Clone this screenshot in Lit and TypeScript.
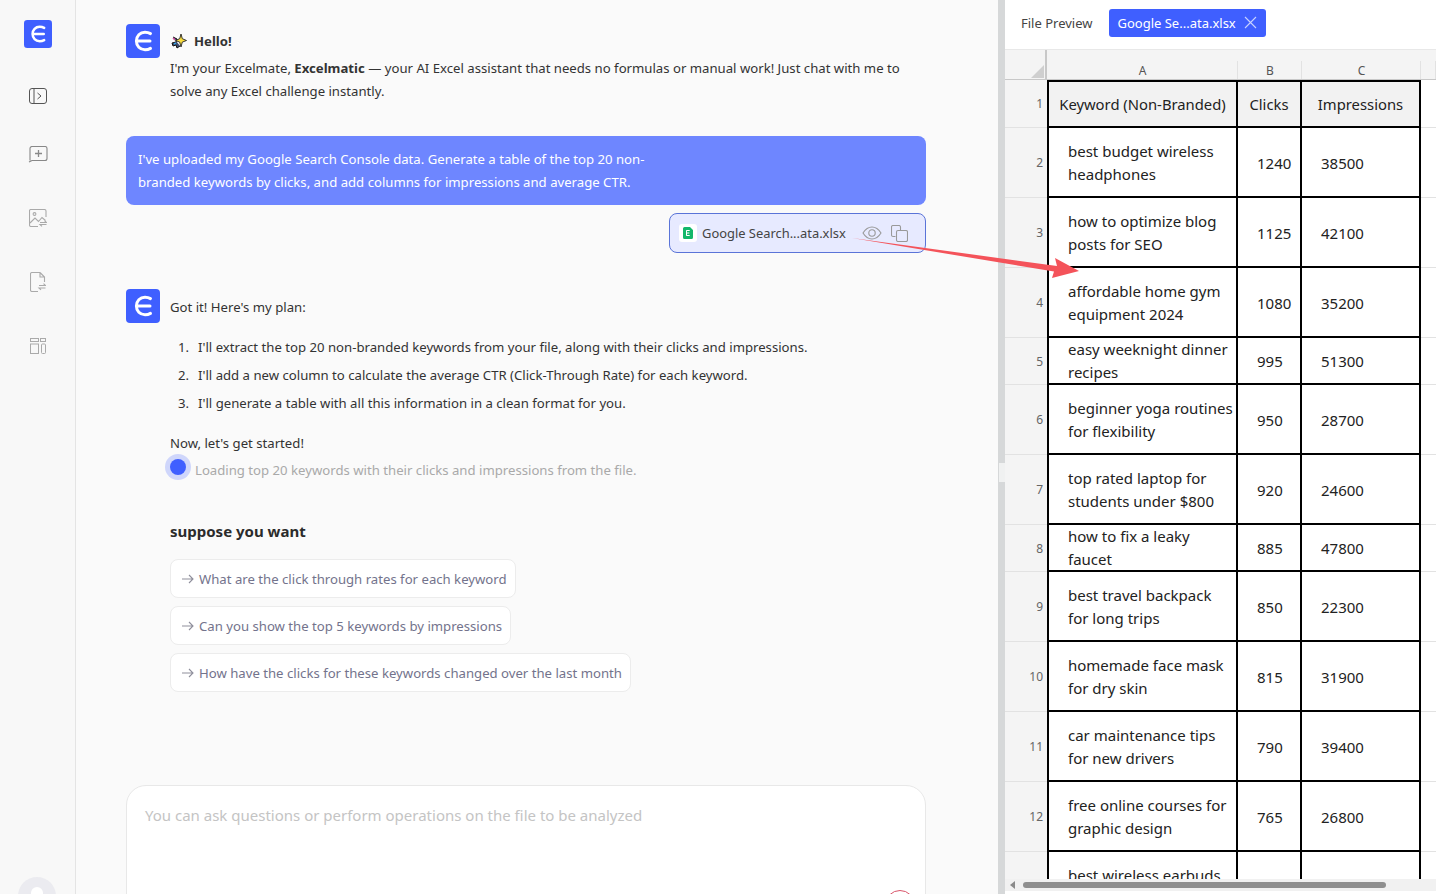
import { LitElement, html, css } from "lit";
import { customElement } from "lit/decorators.js";

const logo = (s: number) => html`<svg class="logo" width=${s} height=${s} viewBox="0 0 34 34"><rect width="34" height="34" rx="4" fill="#3f5fff"/><path d="M24.5 9.6C22.8 8.6 20.8 8.2 19 8.2c-5 0-8.6 3.8-8.6 8.8s3.600 8.800 8.600 8.800c1.900 0 3.800-.4 5.500-1.400" fill="none" stroke="#fff" stroke-width="3" stroke-linecap="round"/><path d="M12 17h12" stroke="#fff" stroke-width="3" stroke-linecap="round"/></svg>`;

const rows: [string, string, string, number][] = [
  ["best budget wireless headphones", "1240", "38500", 70],
  ["how to optimize blog posts for SEO", "1125", "42100", 70],
  ["affordable home gym equipment 2024", "1080", "35200", 70],
  ["easy weeknight dinner recipes", "995", "51300", 47],
  ["beginner yoga routines for flexibility", "950", "28700", 70],
  ["top rated laptop for students under $800", "920", "24600", 70],
  ["how to fix a leaky faucet", "885", "47800", 47],
  ["best travel backpack for long trips", "850", "22300", 70],
  ["homemade face mask for dry skin", "815", "31900", 70],
  ["car maintenance tips for new drivers", "790", "39400", 70],
  ["free online courses for graphic design", "765", "26800", 70],
  ["best wireless earbuds under $100", "740", "44100", 70],
];

const arrow = html`<svg class="arr" width="14" height="12" viewBox="0 0 14 12"><path d="M1 6h11M8 2l4 4-4 4" fill="none" stroke="#8f8f9c" stroke-width="1.1"/></svg>`;

@customElement("app-root")
export class AppRoot extends LitElement {
  static styles = css`
    :host { display: block; width: 1436px; height: 894px; overflow: hidden; position: relative; font-family: "Noto Sans", "Open Sans", sans-serif; font-size: 13.17px; color: #333; background: #fafafa; }
    .app { display: flex; height: 894px; }
    .side { width: 75px; flex: none; border-right: 1px solid #e4e4e4; background: #f8f8f8; display: flex; flex-direction: column; align-items: center; position: relative; }
    .side .logo { margin-top: 20px; }
    .nav { display: block; }
    .n1 { margin-top: 40px; } .n2 { margin-top: 42px; } .n3 { margin-top: 46px; } .n4 { margin-top: 45px; } .n5 { margin-top: 46px; }
    .avatar { position: absolute; left: 18px; top: 877px; width: 38px; height: 38px; border-radius: 50%; background: #ebebf0; }
    .avatar::after { content: ""; position: absolute; left: 13px; top: 10px; width: 12px; height: 12px; border-radius: 50%; background: #fff; }
    .main { width: 922px; flex: none; padding-left: 50px; box-sizing: border-box; position: relative; overflow: hidden; }
    .col { width: 800px; }
    .msg { display: flex; gap: 10px; }
    .msg .logo { flex: none; }
    .hello { padding-top: 24px; }
    .t { line-height: 23px; width: 740px; }
    .title { font-weight: 700; display: flex; align-items: center; gap: 7px; height: 32px; margin-top: 1px; }
    .user { margin-top: 33px; background: #6e86ff; color: #fff; border-radius: 8px; height: 69px; padding: 12px 12px; box-sizing: border-box; line-height: 23px; }
    .user div { width: 530px; }
    .fileRow { display: flex; justify-content: flex-end; margin-top: 8px; }
    .file { width: 257px; height: 40px; box-sizing: border-box; border: 1px solid #5a74d8; border-radius: 8px; background: #e7eaff; display: flex; align-items: center; padding-left: 9px; color: #444; font-size: 12.9px; }
    .fic { width: 18px; height: 18px; background: #fff; border-radius: 3px; display: flex; align-items: center; justify-content: center; margin-right: 5px; flex: none; }
    .fname { width: 160px; white-space: nowrap; }
    .copy { margin-left: 9px; }
    .plan { margin-top: 36px; }
    .pl { height: 34px; display: flex; align-items: center; padding-top: 2px; box-sizing: border-box; }
    ol { list-style: none; margin: 10px 0 0 44px; padding: 0; }
    li { height: 28px; line-height: 28px; display: flex; white-space: nowrap; }
    li span { width: 28px; padding-left: 8px; box-sizing: border-box; }
    .body { margin-left: 44px; }
    .go { margin-top: 15px; height: 23px; line-height: 23px; }
    .load { display: flex; align-items: center; height: 24px; margin-top: 3px; color: #a9a9a9; gap: 9px; }
    .dot { width: 16px; height: 16px; border-radius: 50%; background: #3f5fff; box-shadow: 0 0 0 5px #cfd6fb; flex: none; margin-top: -6px; }
    .sup { font-weight: 700; font-size: 15px; color: #2b2b2b; margin-top: 38px; height: 23px; line-height: 23px; }
    .chips { display: flex; flex-direction: column; align-items: flex-start; gap: 8px; margin-top: 16px; }
    .chip { height: 39px; box-sizing: border-box; border: 1px solid #ececec; border-radius: 8px; background: #fff; display: flex; align-items: center; padding: 0 8px 0 10px; gap: 4px; color: #73738c; white-space: nowrap; }
    .input { position: absolute; left: 50px; top: 785px; width: 800px; height: 140px; box-sizing: border-box; border: 1px solid #e8e8e8; border-radius: 20px; background: #fff; padding: 18px 18px; color: #c4c4c4; font-size: 15px; line-height: 22px; }
    .send { position: absolute; left: 758px; top: 104px; width: 30px; height: 30px; border: 1px solid #d9556a; border-radius: 50%; box-sizing: border-box; }
    .split { width: 7px; flex: none; background: #d6d8d9; position: relative; }
    .split::after { content: ""; position: absolute; left: 1px; top: 463px; width: 6px; height: 19px; background: #f0f1f1; }
    .panel { width: 431px; flex: none; background: #fff; display: flex; flex-direction: column; overflow: hidden; position: relative; }
    .tabs { height: 50px; flex: none; display: flex; align-items: center; padding: 0 0 4px 16px; color: #444; gap: 17px; border-bottom: 1px solid #e8e8e8; font-size: 13px; box-sizing: border-box; }
    .tab { width: 157px; height: 28px; background: #3f5fff; color: #fff; border-radius: 3px; display: flex; align-items: center; justify-content: space-between; padding: 0 9px 0 8px; box-sizing: border-box; font-size: 13px; white-space: nowrap; }
    .sheetwrap { flex: 1; min-height: 0; overflow: hidden; position: relative; }
    .grid { display: grid; grid-template-columns: 42px 191px 64px 119px 15px; background: #fff; }
    .corner { height: 30px; background: #f4f4f4; position: relative; border-bottom: 1px solid #c8c8c8; box-sizing: border-box; border-right: 2px solid #c8c8c8; }
    .corner::after { content: ""; position: absolute; right: 1px; bottom: 1px; border-style: solid; border-width: 0 0 13px 13px; border-color: transparent transparent #cfcfcf transparent; }
    .hd { height: 30px; background: #f4f4f4; box-sizing: border-box; border-bottom: 1px solid #c8c8c8; display: flex; align-items: flex-end; justify-content: center; font-size: 12px; color: #555; line-height: 16px; position: relative; }
    .hd::after { content: ""; position: absolute; right: 0; top: 11px; bottom: 0; width: 1px; background: #e2e2e2; }
    .rn { background: #f4f4f4; border-bottom: 1px solid #e2e2e2; box-sizing: border-box; display: flex; align-items: center; justify-content: flex-end; padding-right: 4px; font-size: 12px; color: #666; }
    .c { box-sizing: border-box; border-right: 2px solid #000; border-bottom: 2px solid #000; display: flex; align-items: center; color: #222; font-size: 15px; line-height: 23px; overflow: hidden; padding-top: 1px; }
    .first { border-left: 2px solid #000; }
    .top { border-top: 2px solid #000; background: #f2f2f2; justify-content: center; white-space: nowrap; font-size: 14.8px; padding-top: 0; }
    .kw { padding-left: 19px; padding-right: 2px; }
    .num { padding-left: 19px; padding-top: 2px; }
    .gut { border-bottom: 1px solid #e2e2e2; }
    .hscroll { position: absolute; left: 0; right: 0; bottom: 3px; height: 12px; background: #f1f1f1; display: flex; align-items: center; }
    .tri { width: 0; height: 0; border-style: solid; border-width: 4px 5px 4px 0; border-color: transparent #8a8a8a transparent transparent; margin-left: 5px; }
    .thumb { position: absolute; left: 18px; width: 363px; height: 6px; border-radius: 3px; background: #8f8f8f; }
    .scrollfoot { position: absolute; left: 0; right: 0; bottom: 0; height: 3px; background: #fff; }
    .overlay { position: absolute; left: 0; top: 0; pointer-events: none; }
  `;

  render() {
    return html`<div class="app">
      <aside class="side">
        ${logo(28)}
        <svg class="nav n1" width="18" height="16" viewBox="0 0 18 16" fill="none" stroke="#555" stroke-width="1"><rect x=".5" y=".5" width="17" height="15" rx="2.5"/><path d="M5 .5v15M8.5 5l3.5 3-3.5 3"/></svg>
        <svg class="nav n2" width="20" height="17" viewBox="0 0 20 17" fill="none" stroke="#888" stroke-width="1.1"><path d="M2 14.500V2.500a2 2 0 0 1 2-2h13a2 2 0 0 1 2 2v10a2 2 0 0 1-2 2H4L1 16"/><path d="M10.500 4v7M7 7.500h7" stroke-width="1.3"/></svg>
        <svg class="nav n3" width="18" height="18" viewBox="0 0 18 18" fill="none" stroke="#aaa" stroke-width="1.1"><path d="M17 8V2a1.500 1.500 0 0 0-1.500-1.500h-14A1.500 1.500 0 0 0 .5 2v14a1.500 1.500 0 0 0 1.500 1.500h7"/><circle cx="5.500" cy="5" r="1.400"/><path d="M1 14l5-5 3.500 3.500L13 8.500l3.500 3"/><path d="M11 13.500h6.500l-2-1.800M17.500 15.500H11l2 1.800"/></svg>
        <svg class="nav n4" width="16" height="20" viewBox="0 0 16 20" fill="none" stroke="#aaa" stroke-width="1.1"><path d="M10 .5H2A1.500 1.500 0 0 0 .5 2v16A1.500 1.500 0 0 0 2 19.500h6M10 .5l4.500 4.500V10M10 .5V5h4.500"/><path d="M9 13.500h6.500l-2-1.800M15.500 16H9l2 1.800"/></svg>
        <svg class="nav n5" width="16" height="16" viewBox="0 0 16 16" fill="none" stroke="#aaa" stroke-width="1"><rect x=".5" y=".5" width="8" height="3"/><rect x="10.500" y=".5" width="5" height="3"/><rect x=".5" y="6" width="8" height="9.500"/><rect x="11.500" y="6" width="4" height="9.500" rx="1"/></svg>
        <div class="avatar"></div>
      </aside>
      <main class="main">
        <div class="col">
          <div class="msg hello">${logo(34)}
            <div class="t">
              <div class="title"><svg width="17" height="17" viewBox="0 0 17 17"><path d="M3 4l4 2-1 3-4 1 1 3 3-1 1 3 3-2" fill="#3b4a6b" stroke="#111" stroke-width="1"/><path d="M3 5l2 2" stroke="#d84fa0" stroke-width="1.500"/><path d="M4 11l2-1" stroke="#3aa0e0" stroke-width="1.500"/><path d="M11 1l1.300 4.700L16.500 7.500l-4.200 1.600L11 14 9.700 9.100 5.500 7.500l4.200-1.800z" fill="#f9dc3c" stroke="#222" stroke-width=".9"/></svg>Hello!</div>
              <div>I'm your Excelmate, <b>Excelmatic</b> — your AI Excel assistant that needs no formulas or manual work! Just chat with me to solve any Excel challenge instantly.</div>
            </div>
          </div>
          <div class="user"><div>I've uploaded my Google Search Console data. Generate a table of the top 20 non-branded keywords by clicks, and add columns for impressions and average CTR.</div></div>
          <div class="fileRow"><div class="file">
            <span class="fic"><svg width="10" height="12" viewBox="0 0 10 12"><path d="M1.500 0H7l3 3v7.500A1.500 1.500 0 0 1 8.500 12h-7A1.500 1.500 0 0 1 0 10.500v-9A1.500 1.500 0 0 1 1.500 0z" fill="#12b76a"/><path d="M3.300 3.500h3.400M3.300 6h3M3.300 8.500h3.400M3.500 3.500v5" stroke="#fff" stroke-width="1"/></svg></span>
            <span class="fname">Google Search...ata.xlsx</span>
            <svg width="20" height="14" viewBox="0 0 20 14" fill="none" stroke="#999" stroke-width="1.1"><path d="M1 7c2.500-4 5.500-6 9-6s6.500 2 9 6c-2.500 4-5.500 6-9 6s-6.500-2-9-6z"/><circle cx="10" cy="7" r="3.200"/></svg>
            <svg class="copy" width="17" height="17" viewBox="0 0 17 17" fill="none" stroke="#999" stroke-width="1.1"><path d="M4.500 11.500H2A1.500 1.500 0 0 1 .5 10V2A1.500 1.500 0 0 1 2 .5h6A1.500 1.500 0 0 1 9.500 2v3.500"/><rect x="5.500" y="5.500" width="11" height="11" rx="1.500"/></svg>
          </div></div>
          <div class="msg plan">${logo(34)}<div class="pl">Got it! Here's my plan:</div></div>
          <ol>
            <li><span>1.</span>I'll extract the top 20 non-branded keywords from your file, along with their clicks and impressions.</li>
            <li><span>2.</span>I'll add a new column to calculate the average CTR (Click-Through Rate) for each keyword.</li>
            <li><span>3.</span>I'll generate a table with all this information in a clean format for you.</li>
          </ol>
          <div class="body">
            <div class="go">Now, let's get started!</div>
            <div class="load"><span class="dot"></span>Loading top 20 keywords with their clicks and impressions from the file.</div>
            <div class="sup">suppose you want</div>
            <div class="chips">
              <div class="chip">${arrow}What are the click through rates for each keyword</div>
              <div class="chip">${arrow}Can you show the top 5 keywords by impressions</div>
              <div class="chip">${arrow}How have the clicks for these keywords changed over the last month</div>
            </div>
          </div>
        </div>
        <div class="input">You can ask questions or perform operations on the file to be analyzed<span class="send"></span></div>
      </main>
      <div class="split"></div>
      <section class="panel">
        <div class="tabs"><span>File Preview</span><div class="tab">Google Se...ata.xlsx<svg width="13" height="13" viewBox="0 0 13 13" stroke="#c9d2ff" stroke-width="1.1"><path d="M1 1l11 11M12 1L1 12"/></svg></div></div>
        <div class="sheetwrap">
          <div class="grid">
            <div class="corner"></div><div class="hd">A</div><div class="hd">B</div><div class="hd">C</div><div class="hd"></div>
            <div class="rn" style="height:48px">1</div>
            <div class="c first top">Keyword (Non-Branded)</div><div class="c top">Clicks</div><div class="c top">Impressions</div><div class="gut"></div>
            ${rows.map((r, i) => html`
              <div class="rn" style="height:${r[3]}px">${i + 2}</div>
              <div class="c first kw" style="height:${r[3]}px">${r[0]}</div><div class="c num" style="height:${r[3]}px">${r[1]}</div><div class="c num" style="height:${r[3]}px">${r[2]}</div><div class="gut"></div>
            `)}
          </div>
          <div class="hscroll"><span class="tri"></span><span class="thumb"></span></div>
          <div class="scrollfoot"></div>
        </div>
      </section>
    </div>
    <svg class="overlay" width="1436" height="894" viewBox="0 0 1436 894"><path d="M852 238L1057 266L1055 258L1079 271L1052 278L1054 271.500z" fill="#f4535a"/></svg>`;
  }
}
